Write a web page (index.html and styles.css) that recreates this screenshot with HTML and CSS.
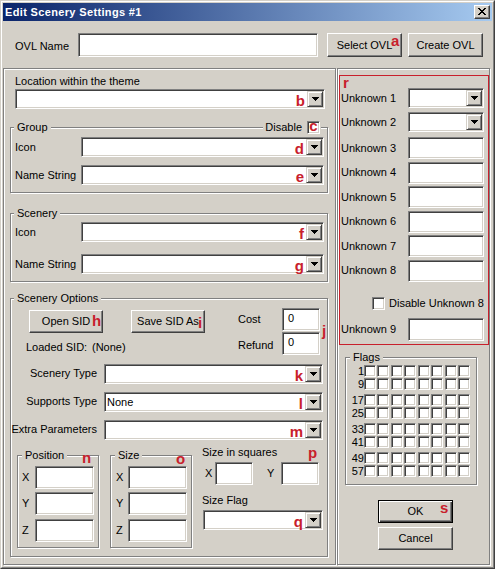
FILE: index.html
```html
<!DOCTYPE html>
<html lang="en">
<head>
<meta charset="utf-8">
<title>Edit Scenery Settings #1</title>
<link rel="stylesheet" href="styles.css">
</head>
<body>
<div class="window">
<div class="frame">
  <div class="titlebar">
    <span class="title">Edit Scenery Settings #1</span>
    <span class="closebtn"><svg width="8" height="7" viewBox="0 0 8 7" shape-rendering="crispEdges"><path d="M0 0h2v1H0zM6 0h2v1H6zM1 1h2v1H1zM5 1h2v1H5zM2 2h4v1H2zM3 3h2v1H3zM2 4h4v1H2zM1 5h2v1H1zM5 5h2v1H5zM0 6h2v1H0zM6 6h2v1H6z"/></svg></span>
  </div>

  <div class="toprow">
    <span class="ovl-lbl">OVL Name</span>
    <div class="edit ovl-edit"></div>
    <div class="btn btn-select">Select OVL<span class="badge badge-a">a</span></div>
    <div class="btn btn-create">Create OVL</div>
  </div>

  <div class="panels">
    <div class="etched left-panel">
      <div class="loc-lbl">Location within the theme</div>
      <div class="combo loc-combo"><span class="ctext"></span><span class="mark">b</span><span class="dd"><svg width="7" height="4" viewBox="0 0 7 4" shape-rendering="crispEdges"><path d="M0 0h7v1H0zM1 1h5v1H1zM2 2h3v1H2zM3 3h1v1H3z"/></svg></span></div>

      <div class="etched gbox grp-group">
        <div class="ghead"><span class="legend">Group</span><span class="legend legend-right">Disable<span class="cb cb-c"><span class="mark-c">c</span></span></span></div>
        <div class="frow frow-g1"><span class="flbl">Icon</span><div class="combo gcombo"><span class="ctext"></span><span class="mark">d</span><span class="dd"><svg width="7" height="4" viewBox="0 0 7 4" shape-rendering="crispEdges"><path d="M0 0h7v1H0zM1 1h5v1H1zM2 2h3v1H2zM3 3h1v1H3z"/></svg></span></div></div>
        <div class="frow frow-g2"><span class="flbl">Name String</span><div class="combo gcombo"><span class="ctext"></span><span class="mark">e</span><span class="dd"><svg width="7" height="4" viewBox="0 0 7 4" shape-rendering="crispEdges"><path d="M0 0h7v1H0zM1 1h5v1H1zM2 2h3v1H2zM3 3h1v1H3z"/></svg></span></div></div>
      </div>

      <div class="etched gbox grp-scenery">
        <div class="ghead"><span class="legend">Scenery</span></div>
        <div class="frow frow-s1"><span class="flbl">Icon</span><div class="combo gcombo"><span class="ctext"></span><span class="mark">f</span><span class="dd"><svg width="7" height="4" viewBox="0 0 7 4" shape-rendering="crispEdges"><path d="M0 0h7v1H0zM1 1h5v1H1zM2 2h3v1H2zM3 3h1v1H3z"/></svg></span></div></div>
        <div class="frow frow-s2"><span class="flbl">Name String</span><div class="combo gcombo"><span class="ctext"></span><span class="mark">g</span><span class="dd"><svg width="7" height="4" viewBox="0 0 7 4" shape-rendering="crispEdges"><path d="M0 0h7v1H0zM1 1h5v1H1zM2 2h3v1H2zM3 3h1v1H3z"/></svg></span></div></div>
      </div>

      <div class="etched gbox grp-options">
        <div class="ghead"><span class="legend">Scenery Options</span></div>
        <div class="sid">
          <div class="sid-left">
            <div class="sid-btns">
              <div class="btn btn-sid">Open SID<span class="badge badge-h">h</span></div>
              <div class="btn btn-sid btn-save">Save SID As<span class="badge badge-i">i</span></div>
            </div>
            <div class="loaded"><span class="loaded-k">Loaded SID:</span><span>(None)</span></div>
          </div>
          <div class="sid-right">
            <div class="crow"><span class="clbl">Cost</span><div class="edit cedit">0</div></div>
            <div class="crow crow-2"><span class="clbl clbl-r">Refund</span><div class="edit cedit">0</div></div>
          </div>
        </div>
        <span class="badge badge-j">j</span>

        <div class="orow orow-1"><span class="olbl">Scenery Type</span><div class="combo ocombo"><span class="ctext"></span><span class="mark">k</span><span class="dd"><svg width="7" height="4" viewBox="0 0 7 4" shape-rendering="crispEdges"><path d="M0 0h7v1H0zM1 1h5v1H1zM2 2h3v1H2zM3 3h1v1H3z"/></svg></span></div></div>
        <div class="orow"><span class="olbl">Supports Type</span><div class="combo ocombo"><span class="ctext">None</span><span class="mark">l</span><span class="dd"><svg width="7" height="4" viewBox="0 0 7 4" shape-rendering="crispEdges"><path d="M0 0h7v1H0zM1 1h5v1H1zM2 2h3v1H2zM3 3h1v1H3z"/></svg></span></div></div>
        <div class="orow"><span class="olbl">Extra Parameters</span><div class="combo ocombo"><span class="ctext"></span><span class="mark">m</span><span class="dd"><svg width="7" height="4" viewBox="0 0 7 4" shape-rendering="crispEdges"><path d="M0 0h7v1H0zM1 1h5v1H1zM2 2h3v1H2zM3 3h1v1H3z"/></svg></span></div></div>

        <div class="dims">
          <div class="etched gbox pbox">
            <div class="ghead"><span class="legend legend-p">Position</span></div>
            <div class="prow prow-1"><span class="plbl">X</span><div class="edit pedit"></div></div>
            <div class="prow prow-2"><span class="plbl">Y</span><div class="edit pedit"></div></div>
            <div class="prow prow-3"><span class="plbl">Z</span><div class="edit pedit"></div></div>
            <span class="badge badge-n">n</span>
          </div>
          <div class="etched gbox pbox sbox">
            <div class="ghead"><span class="legend legend-p">Size</span></div>
            <div class="prow prow-1"><span class="plbl plbl-s">X</span><div class="edit pedit"></div></div>
            <div class="prow prow-2"><span class="plbl plbl-s">Y</span><div class="edit pedit"></div></div>
            <div class="prow prow-3"><span class="plbl plbl-s">Z</span><div class="edit pedit"></div></div>
            <span class="badge badge-o">o</span>
          </div>
          <div class="squares">
            <div class="sq-lbl">Size in squares</div>
            <div class="sqrow"><span class="sqx">X</span><div class="edit sqedit"></div><span class="sqy">Y</span><div class="edit sqedit"></div></div>
            <div class="sf-lbl">Size Flag</div>
            <div class="combo sfcombo"><span class="ctext"></span><span class="mark">q</span><span class="dd"><svg width="7" height="4" viewBox="0 0 7 4" shape-rendering="crispEdges"><path d="M0 0h7v1H0zM1 1h5v1H1zM2 2h3v1H2zM3 3h1v1H3z"/></svg></span></div>
            <span class="badge badge-p">p</span>
          </div>
        </div>
      </div>
    </div>

    <div class="etched right-panel">
      <div class="redbox">
        <span class="badge badge-r">r</span>
        <div class="urow urow-1"><span class="ulbl">Unknown 1</span><div class="combo ucombo"><span class="ctext"></span><span class="dd"><svg width="7" height="4" viewBox="0 0 7 4" shape-rendering="crispEdges"><path d="M0 0h7v1H0zM1 1h5v1H1zM2 2h3v1H2zM3 3h1v1H3z"/></svg></span></div></div>
        <div class="urow urow-2"><span class="ulbl">Unknown 2</span><div class="combo ucombo"><span class="ctext"></span><span class="dd"><svg width="7" height="4" viewBox="0 0 7 4" shape-rendering="crispEdges"><path d="M0 0h7v1H0zM1 1h5v1H1zM2 2h3v1H2zM3 3h1v1H3z"/></svg></span></div></div>
        <div class="urow urow-3"><span class="ulbl">Unknown 3</span><div class="edit uedit"></div></div>
        <div class="urow urow-n"><span class="ulbl">Unknown 4</span><div class="edit uedit"></div></div>
        <div class="urow urow-n"><span class="ulbl">Unknown 5</span><div class="edit uedit"></div></div>
        <div class="urow urow-n"><span class="ulbl">Unknown 6</span><div class="edit uedit"></div></div>
        <div class="urow urow-n"><span class="ulbl">Unknown 7</span><div class="edit uedit"></div></div>
        <div class="urow urow-n"><span class="ulbl">Unknown 8</span><div class="edit uedit"></div></div>
        <div class="chkrow"><span class="cb"></span><span class="chk-lbl">Disable Unknown 8</span></div>
        <div class="urow urow-9"><span class="ulbl">Unknown 9</span><div class="edit uedit uedit-9"></div></div>
      </div>

      <div class="etched gbox flags">
        <div class="ghead"><span class="legend legend-p">Flags</span></div>
        <div class="flagrow"><span class="fnum">1</span><span class="cb fcb"></span><span class="cb fcb"></span><span class="cb fcb"></span><span class="cb fcb"></span><span class="cb fcb"></span><span class="cb fcb"></span><span class="cb fcb"></span><span class="cb fcb"></span></div>
        <div class="flagrow"><span class="fnum">9</span><span class="cb fcb"></span><span class="cb fcb"></span><span class="cb fcb"></span><span class="cb fcb"></span><span class="cb fcb"></span><span class="cb fcb"></span><span class="cb fcb"></span><span class="cb fcb"></span></div>
        <div class="flagrow"><span class="fnum">17</span><span class="cb fcb"></span><span class="cb fcb"></span><span class="cb fcb"></span><span class="cb fcb"></span><span class="cb fcb"></span><span class="cb fcb"></span><span class="cb fcb"></span><span class="cb fcb"></span></div>
        <div class="flagrow"><span class="fnum">25</span><span class="cb fcb"></span><span class="cb fcb"></span><span class="cb fcb"></span><span class="cb fcb"></span><span class="cb fcb"></span><span class="cb fcb"></span><span class="cb fcb"></span><span class="cb fcb"></span></div>
        <div class="flagrow"><span class="fnum">33</span><span class="cb fcb"></span><span class="cb fcb"></span><span class="cb fcb"></span><span class="cb fcb"></span><span class="cb fcb"></span><span class="cb fcb"></span><span class="cb fcb"></span><span class="cb fcb"></span></div>
        <div class="flagrow"><span class="fnum">41</span><span class="cb fcb"></span><span class="cb fcb"></span><span class="cb fcb"></span><span class="cb fcb"></span><span class="cb fcb"></span><span class="cb fcb"></span><span class="cb fcb"></span><span class="cb fcb"></span></div>
        <div class="flagrow"><span class="fnum">49</span><span class="cb fcb"></span><span class="cb fcb"></span><span class="cb fcb"></span><span class="cb fcb"></span><span class="cb fcb"></span><span class="cb fcb"></span><span class="cb fcb"></span><span class="cb fcb"></span></div>
        <div class="flagrow"><span class="fnum">57</span><span class="cb fcb"></span><span class="cb fcb"></span><span class="cb fcb"></span><span class="cb fcb"></span><span class="cb fcb"></span><span class="cb fcb"></span><span class="cb fcb"></span><span class="cb fcb"></span></div>
      </div>

      <div class="btn btn-ok">OK<span class="badge badge-s">s</span></div>
      <div class="btn btn-cancel">Cancel</div>
    </div>
  </div>
</div>
</div>
</body>
</html>
```

FILE: styles.css
```css
* { box-sizing: border-box; }
html, body { margin: 0; padding: 0; }
body {
  background: #d4d0c8;
  font: 11px/13px "Liberation Sans", Arial, sans-serif;
  color: #000;
}

.window {
  width: 495px;
  height: 569px;
  border: 1px solid;
  border-color: #d4d0c8 #404040 #404040 #d4d0c8;
  background: #d4d0c8;
  overflow: hidden;
}
.frame {
  height: 100%;
  border: 1px solid;
  border-color: #fff #808080 #808080 #fff;
  padding: 1px;
  display: flex;
  flex-direction: column;
}

/* title bar */
.titlebar {
  flex: none;
  height: 18px;
  display: flex;
  align-items: center;
  justify-content: space-between;
  background: linear-gradient(to right, #0a246a, #a6caf0);
}
.title { margin-left: 2px; color: #fff; font-weight: bold; letter-spacing: 0.35px; }
.closebtn {
  width: 16px;
  height: 14px;
  margin-right: 2px;
  padding: 2px 0 0 3px;
  background: #d4d0c8;
  border: 1px solid;
  border-color: #fff #404040 #404040 #fff;
  box-shadow: inset -1px -1px #808080;
  line-height: 0;
}
.closebtn svg { display: block; }

/* common controls */
.edit, .combo, .cb {
  background: #fff;
  border: 1px solid;
  border-color: #808080 #fff #fff #808080;
  box-shadow: inset 1px 1px #404040, inset -1px -1px #d4d0c8;
}
.combo {
  display: flex;
  height: 20px;
  padding: 1px;
}
.ctext { flex: 1; padding-left: 1px; line-height: 16px; overflow: hidden; white-space: nowrap; }
.mark, .badge, .mark-c {
  font-weight: bold;
  font-size: 15px;
  color: #c8202c;
}
.mark { line-height: 12px; align-self: flex-end; margin-right: 2px; }
.dd {
  flex: none;
  width: 16px;
  height: 16px;
  padding: 5px 0 0 4px;
  background: #d4d0c8;
  border: 1px solid;
  border-color: #d4d0c8 #404040 #404040 #d4d0c8;
  box-shadow: inset 1px 1px #fff, inset -1px -1px #808080;
  line-height: 0;
}
.dd svg { display: block; }
.cb { display: block; flex: none; width: 13px; height: 13px; }

.btn {
  position: relative;
  display: flex;
  align-items: center;
  justify-content: center;
  background: #d4d0c8;
  border: 1px solid;
  border-color: #fff #404040 #404040 #fff;
  box-shadow: inset -1px -1px #808080;
}
.badge { position: absolute; line-height: 15px; }

.etched {
  border: 1px solid #808080;
  box-shadow: inset 1px 1px #fff, 1px 1px #fff;
}
.gbox { position: relative; }
.ghead {
  display: flex;
  justify-content: space-between;
  align-items: center;
  height: 13px;
  margin-top: -7px;
  padding: 0 6px 0 3px;
}
.legend {
  background: #d4d0c8;
  padding: 0 3px;
  line-height: 13px;
  display: flex;
  align-items: center;
}
.legend-p { margin-left: 1px; }
.legend-right { padding: 0 1px 0 2px; }

/* top row */
.toprow {
  flex: none;
  display: flex;
  align-items: center;
  height: 24px;
  margin-top: 12px;
  padding-left: 12px;
}
.ovl-lbl { width: 63px; padding-top: 3px; }
.ovl-edit { width: 240px; height: 24px; }
.btn-select { width: 75px; height: 24px; margin-left: 9px; }
.btn-create { width: 75px; height: 24px; margin-left: 6px; }
.badge-a { left: 63px; top: -1px; }

/* panels */
.panels {
  flex: none;
  display: flex;
  height: 497px;
  margin-top: 11px;
}
.left-panel { width: 333px; height: 497px; }
.right-panel { width: 153px; height: 497px; margin-left: 1px; }

.loc-lbl { margin: 6px 0 0 11px; }
.loc-combo { margin: 1px 0 0 11px; width: 310px; }

.grp-group { margin: 18px 0 0 6px; width: 318px; height: 66px; }
.grp-scenery { margin: 20px 0 0 6px; width: 318px; height: 69px; }
.grp-options { margin: 16px 0 0 6px; width: 318px; height: 259px; }

.cb-c { margin-left: 5px; display: flex; justify-content: center; align-items: flex-start; }
.mark-c { line-height: 8px; }

.frow { display: flex; align-items: center; height: 20px; }
.flbl { width: 66px; margin-left: 4px; }
.gcombo { width: 243px; }
.frow-g1 { margin-top: 3px; }
.frow-g2 { margin-top: 8px; }
.frow-s1 { margin-top: 2px; }
.frow-s2 { margin-top: 12px; }

/* scenery options */
.sid { display: flex; align-items: flex-start; }
.sid-left { width: 227px; }
.sid-btns { display: flex; margin-top: 5px; padding-left: 18px; }
.btn-sid { width: 74px; height: 23px; }
.btn-save { margin-left: 28px; }
.badge-h { left: 62px; top: 2px; }
.badge-i { left: 66px; top: 4px; }
.loaded { display: flex; margin-top: 8px; padding-left: 15px; }
.loaded-k { width: 66px; }
.sid-right { margin-top: 3px; }
.crow { display: flex; align-items: center; }
.crow-2 { margin-top: 1px; }
.clbl { width: 44px; }
.clbl-r { padding-top: 4px; }
.cedit { width: 38px; height: 23px; padding: 3px 0 0 5px; }
.badge-j { left: 311px; top: 24px; }

.orow { display: flex; align-items: center; height: 20px; margin-top: 8px; }
.orow-1 { margin-top: 9px; }
.olbl { width: 93px; padding: 0 7px 2px 0; text-align: right; white-space: nowrap; }
.ocombo { width: 219px; }

.dims { display: flex; align-items: flex-start; margin-top: 6px; }
.pbox { margin: 9px 0 0 6px; width: 82px; height: 93px; }
.sbox { margin-left: 11px; }
.prow { display: flex; align-items: center; height: 23px; }
.prow-1 { margin-top: 4px; }
.prow-2 { margin-top: 3px; }
.prow-3 { margin-top: 4px; }
.plbl { width: 17px; padding-left: 4px; }
.plbl-s { padding-left: 5px; }
.pedit { width: 59px; height: 23px; }
.badge-n { left: 64px; top: -6px; }
.badge-o { left: 65px; top: -5px; }

.squares { position: relative; margin-left: 10px; }
.sqrow { display: flex; align-items: center; height: 23px; margin-top: 3px; }
.sqx { width: 10px; margin-left: 3px; }
.sqy { width: 14px; margin-left: 14px; }
.sqedit { width: 38px; height: 23px; }
.sf-lbl { margin-top: 9px; }
.sfcombo { width: 120px; margin: 3px 0 0 1px; }
.badge-p { left: 106px; top: -1px; }

/* right panel */
.redbox {
  position: relative;
  margin: 6px 0 0 1px;
  width: 150px;
  height: 270px;
  border: 1px solid #c8202c;
  padding-left: 1px;
}
.badge-r { left: 3px; top: -1px; }
.urow { display: flex; align-items: center; }
.ulbl { width: 67px; white-space: nowrap; }
.ucombo { width: 76px; }
.uedit { width: 76px; height: 22px; }
.uedit-9 { height: 23px; }
.urow-1 { margin-top: 12px; }
.urow-2 { margin-top: 4px; }
.urow-3 { margin-top: 5px; }
.urow-n { margin-top: 2.5px; }
.urow-9 { margin-top: 8px; }
.chkrow { display: flex; align-items: center; margin-top: 15.5px; padding-left: 31px; }
.chk-lbl { margin-left: 4px; white-space: nowrap; }

.flags { margin: 12px 0 0 7px; width: 132px; height: 128px; }
.flagrow { display: flex; gap: 1.43px; height: 12px; margin-top: 1.4px; }
.flagrow:nth-child(2) { margin-top: 1px; }
.flagrow:nth-child(4), .flagrow:nth-child(6), .flagrow:nth-child(8) { margin-top: 3.6px; }
.fnum { width: 18px; margin-right: -1.43px; text-align: right; line-height: 12px; }
.fcb { width: 12px; height: 12px; }

.btn-ok {
  width: 75px;
  height: 23px;
  margin: 15px 0 0 40px;
  border: 1px solid #000;
  box-shadow: inset 1px 1px #fff, inset -1px -1px #404040, inset -2px -2px #808080;
}
.badge-s { left: 61px; top: -1px; }
.btn-cancel { width: 75px; height: 23px; margin: 4px 0 0 40px; }
```
